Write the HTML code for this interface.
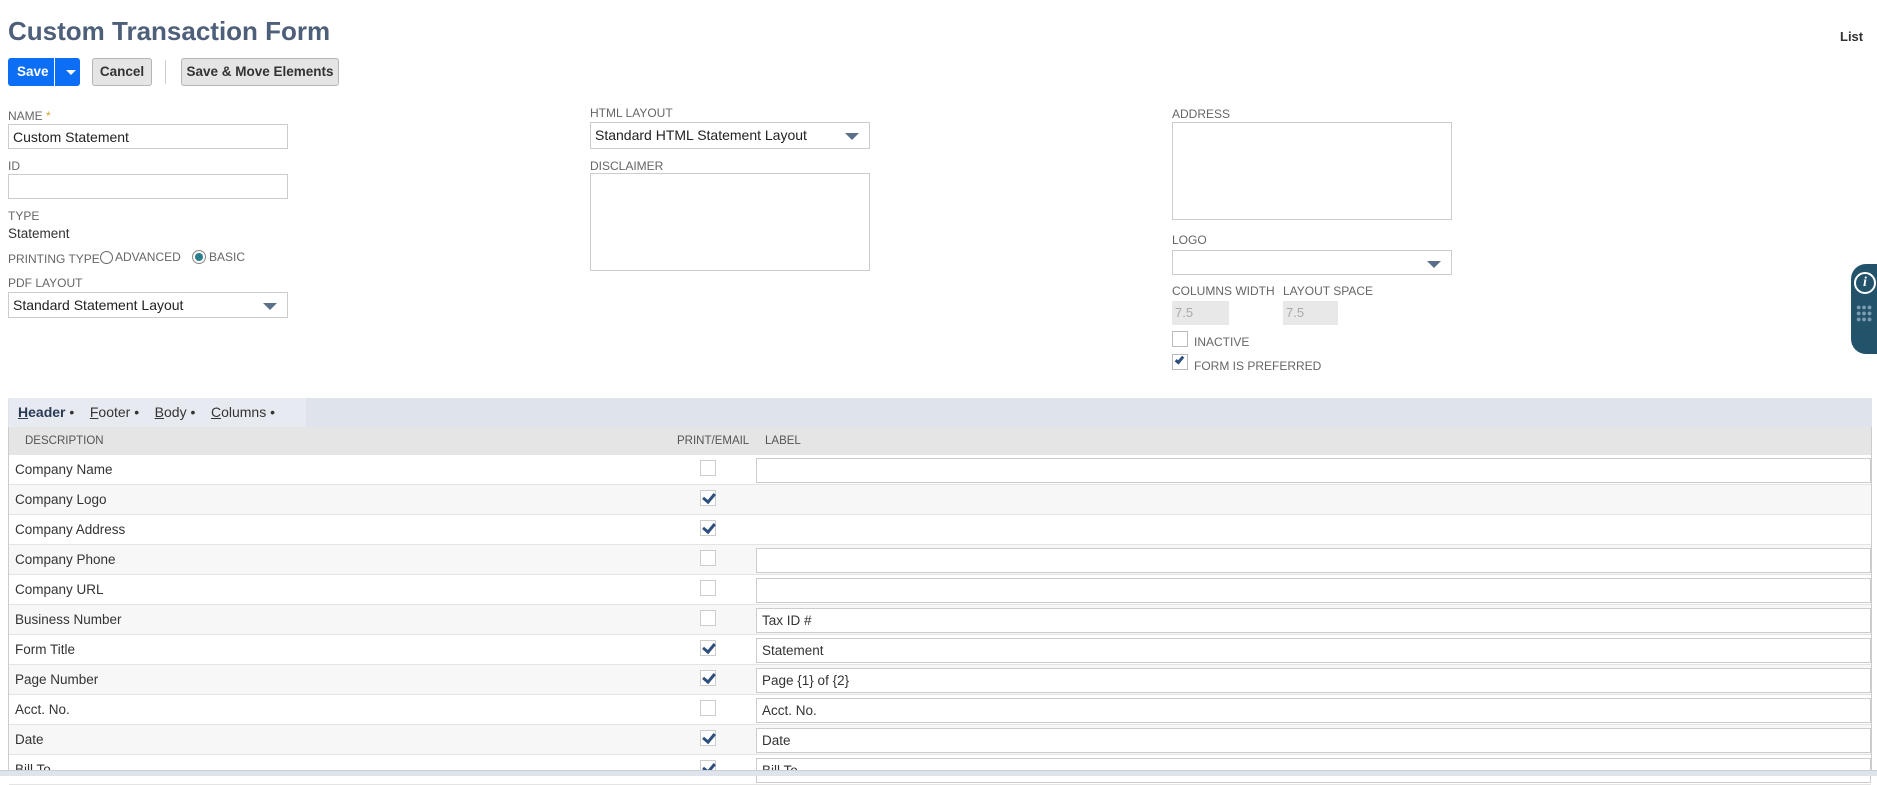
<!DOCTYPE html>
<html><head><meta charset="utf-8"><style>
*{box-sizing:border-box;margin:0;padding:0}
body{width:1877px;height:776px;overflow:hidden;background:#fff;font-family:"Liberation Sans",sans-serif;color:#333;position:relative}
.a{position:absolute}
.lbl{position:absolute;font-size:12px;color:#666;text-transform:uppercase}
.inp{position:absolute;border:1px solid #ccc;background:#fff;font-size:14px;color:#222;padding:4px 4px}
.btn{position:absolute;border:1px solid #b4b4b4;background:#e5e5e5;border-radius:3px;font-size:13.5px;font-weight:bold;color:#333;text-align:center;line-height:26px}
.caret{position:absolute;right:10px;top:10px;width:0;height:0;border-left:7px solid transparent;border-right:7px solid transparent;border-top:7px solid #5a6f8a}
.row{position:absolute;left:9px;width:1862px;height:30px;border-bottom:1px solid #e4e4e4;font-size:13.5px}
.row span{position:absolute;left:6px;top:7px}
.cb{position:absolute;left:691px;top:5px;width:16px;height:16px;border:1px solid #ccc;background:#fff}
.cb.c::after{content:"";position:absolute;left:4px;top:0px;width:5px;height:9px;border:solid #2d4f7e;border-width:0 3px 3px 0;transform:rotate(40deg)}
.li{position:absolute;left:747px;top:3px;width:1115px;height:25px;border:1px solid #ccc;background:#fff;font-size:13.5px;padding:4px 5px}
</style></head><body>
<div class="a" style="left:8px;top:16px;font-size:26px;font-weight:bold;color:#4d5f79">Custom Transaction Form</div>
<div class="a" style="left:1840px;top:29px;font-size:13px;font-weight:bold;color:#333">List</div>

<div class="a" style="left:8px;top:58px;width:72px;height:28px;background:#0c6df5;border-radius:3px;color:#fff;font-weight:bold;font-size:13.5px;line-height:28px"><span style="margin-left:9px">Save</span><div style="position:absolute;left:46px;top:0;width:1px;height:28px;background:#fff"></div><div style="position:absolute;left:58px;top:12px;border-left:5px solid transparent;border-right:5px solid transparent;border-top:5px solid #fff"></div></div>
<div class="btn" style="left:92px;top:58px;width:60px;height:28px">Cancel</div>
<div class="a" style="left:165px;top:60px;width:1px;height:24px;background:#ccc"></div>
<div class="btn" style="left:181px;top:58px;width:158px;height:28px">Save &amp; Move Elements</div>

<div class="lbl" style="left:8px;top:109px">Name <span style="color:#d5a32a">*</span></div>
<div class="inp" style="left:8px;top:124px;width:280px;height:25px">Custom Statement</div>
<div class="lbl" style="left:8px;top:159px">ID</div>
<div class="inp" style="left:8px;top:174px;width:280px;height:25px"></div>
<div class="lbl" style="left:8px;top:209px">Type</div>
<div class="a" style="left:8px;top:226px;font-size:13.5px">Statement</div>
<div class="lbl" style="left:8px;top:252px">Printing Type</div>
<div class="a" style="left:100px;top:251px;width:13px;height:13px;border:1px solid #666;border-radius:50%"></div>
<div class="lbl" style="left:115px;top:250px">Advanced</div>
<div class="a" style="left:192px;top:250px;width:14px;height:14px;border:1px solid #888;border-radius:50%;background:#fff"><div style="margin:2px;width:8px;height:8px;border-radius:50%;background:#2a7f8a"></div></div>
<div class="lbl" style="left:209px;top:250px">Basic</div>
<div class="lbl" style="left:8px;top:276px">PDF Layout</div>
<div class="inp" style="left:8px;top:292px;width:280px;height:26px">Standard Statement Layout<div class="caret"></div></div>

<div class="lbl" style="left:590px;top:106px">HTML Layout</div>
<div class="inp" style="left:590px;top:122px;width:280px;height:27px">Standard HTML Statement Layout<div class="caret"></div></div>
<div class="lbl" style="left:590px;top:159px">Disclaimer</div>
<div class="inp" style="left:590px;top:173px;width:280px;height:98px"></div>

<div class="lbl" style="left:1172px;top:107px">Address</div>
<div class="inp" style="left:1172px;top:122px;width:280px;height:98px"></div>
<div class="lbl" style="left:1172px;top:233px">Logo</div>
<div class="inp" style="left:1172px;top:250px;width:280px;height:25px"><div class="caret"></div></div>
<div class="lbl" style="left:1172px;top:284px">Columns Width</div>
<div class="lbl" style="left:1283px;top:284px">Layout Space</div>
<div class="a" style="left:1172px;top:301px;width:57px;height:24px;background:#e8e8e8;color:#aaa;font-size:13px;padding:4px 3px">7.5</div>
<div class="a" style="left:1283px;top:301px;width:55px;height:24px;background:#e8e8e8;color:#aaa;font-size:13px;padding:4px 3px">7.5</div>
<div class="a" style="left:1172px;top:331px;width:16px;height:16px;border:1px solid #bbb"></div>
<div class="lbl" style="left:1194px;top:335px">Inactive</div>
<div class="a" style="left:1172px;top:354px;width:16px;height:16px;border:1px solid #bbb"><div style="position:absolute;left:4px;top:0;width:5px;height:9px;border:solid #2d4f7e;border-width:0 3px 3px 0;transform:rotate(40deg)"></div></div>
<div class="lbl" style="left:1194px;top:359px">Form is Preferred</div>

<div class="a" style="left:1851px;top:264px;width:30px;height:90px;background:#23536b;border-radius:15px 0 0 15px">
<div style="position:absolute;left:3px;top:8px;width:22px;height:22px;border:2px solid #fff;border-radius:50%;color:#fff;font:italic bold 14px 'Liberation Serif',serif;text-align:center;line-height:18px">i</div>
<div style="position:absolute;left:5px;top:40px;width:22px;font-size:9px;line-height:6px;color:#7a9bb0;letter-spacing:0">●●●<br>●●●<br>●●●</div>
</div>

<div class="a" style="left:8px;top:398px;width:1864px;height:378px;border-left:1px solid #ccc;border-right:1px solid #ccc"></div>
<div class="a" style="left:8px;top:398px;width:1864px;height:29px;background:#dfe4ec"></div>
<div class="a" style="left:9px;top:398px;width:297px;height:29px;background:#e7ebf1"></div>
<div class="a" style="left:18px;top:404px;font-size:14px;color:#333"><b style="text-decoration:underline;text-decoration-thickness:1px;color:#2a3a55">H</b><b style="color:#2a3a55">eader</b> •&nbsp;&nbsp;&nbsp; <u>F</u>ooter •&nbsp;&nbsp;&nbsp; <u>B</u>ody •&nbsp;&nbsp;&nbsp; <u>C</u>olumns •</div>
<div class="a" style="left:9px;top:427px;width:1862px;height:28px;background:#e5e5e5;font-size:11.5px;color:#555">
<span style="position:absolute;left:16px;top:8px">DESCRIPTION</span>
<span style="position:absolute;left:668px;top:8px">PRINT/EMAIL</span>
<span style="position:absolute;left:756px;top:8px">LABEL</span></div>

<div class="row" style="top:455px"><span>Company Name</span><div class="cb"></div><div class="li"></div></div>
<div class="row" style="top:485px;background:#f7f7f7"><span>Company Logo</span><div class="cb c"></div></div>
<div class="row" style="top:515px"><span>Company Address</span><div class="cb c"></div></div>
<div class="row" style="top:545px;background:#f7f7f7"><span>Company Phone</span><div class="cb"></div><div class="li"></div></div>
<div class="row" style="top:575px"><span>Company URL</span><div class="cb"></div><div class="li"></div></div>
<div class="row" style="top:605px;background:#f7f7f7"><span>Business Number</span><div class="cb"></div><div class="li">Tax ID #</div></div>
<div class="row" style="top:635px"><span>Form Title</span><div class="cb c"></div><div class="li">Statement</div></div>
<div class="row" style="top:665px;background:#f7f7f7"><span>Page Number</span><div class="cb c"></div><div class="li">Page {1} of {2}</div></div>
<div class="row" style="top:695px"><span>Acct. No.</span><div class="cb"></div><div class="li">Acct. No.</div></div>
<div class="row" style="top:725px;background:#f7f7f7"><span>Date</span><div class="cb c"></div><div class="li">Date</div></div>
<div class="row" style="top:755px"><span>Bill To</span><div class="cb c"></div><div class="li">Bill To</div></div>
<div class="a" style="left:0;top:770px;width:1877px;height:6px;background:#dfe4ec;border-top:1px solid #c8cfd9"></div>
</body></html>
